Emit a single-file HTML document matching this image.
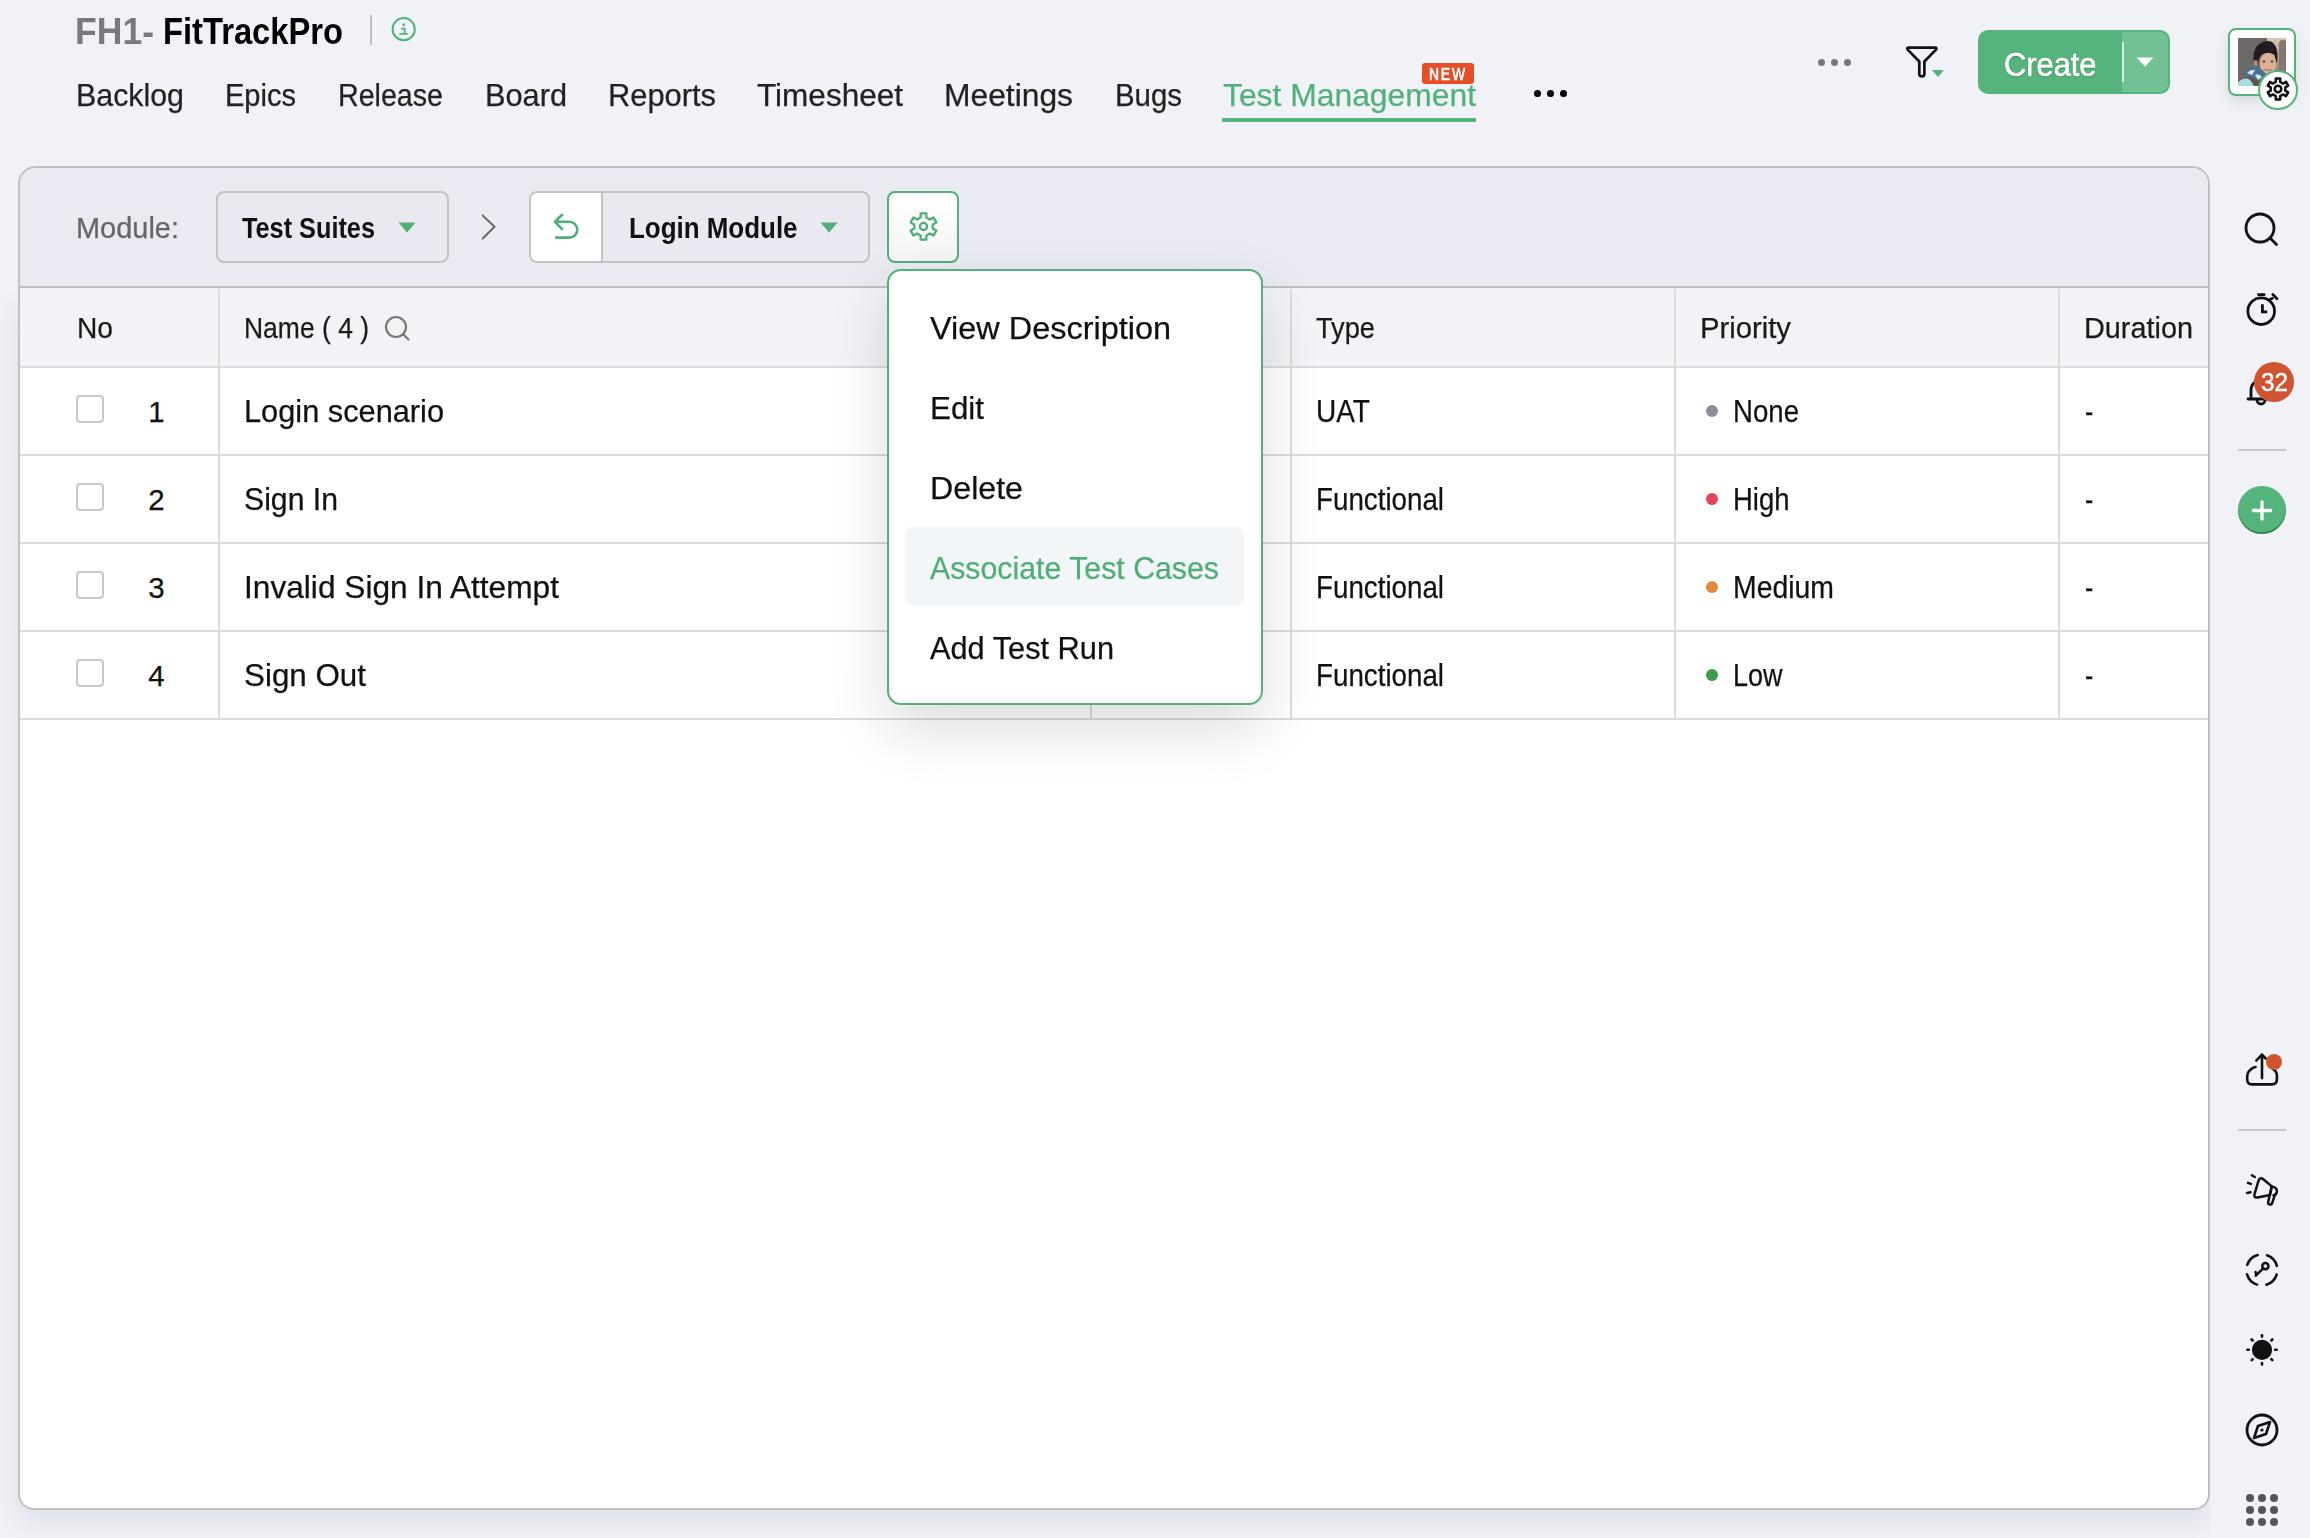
<!DOCTYPE html>
<html><head><meta charset="utf-8"><title>Test Management</title>
<style>
html,body{margin:0;padding:0;}
body{width:2310px;height:1538px;position:relative;overflow:hidden;background:#f1f2f7;font-family:"Liberation Sans",sans-serif;}
.t{position:absolute;white-space:nowrap;line-height:normal;transform-origin:0 0;-webkit-text-stroke:0.25px currentColor;}
</style></head><body>
<div style="position:absolute;left:18px;top:300px;width:2192px;height:1210px;border-radius:0 0 16px 16px;box-shadow:0 10px 28px rgba(30,40,90,.10)"></div>
<div style="position:absolute;left:2210px;top:0;width:100px;height:1538px;background:#f1f2f7"></div>
<div class="t" style="left:75px;top:11.4px;font-size:36px;color:#7a7a7a;font-weight:700;-webkit-text-stroke:0;transform:scaleX(0.9877);">FH1-</div>
<div class="t" style="left:163px;top:11.4px;font-size:36px;color:#000;font-weight:700;-webkit-text-stroke:0;transform:scaleX(0.9089);">FitTrackPro</div>
<div style="position:absolute;left:370px;top:15px;width:2px;height:30px;background:#c0c0c0"></div>
<svg style="position:absolute;left:390px;top:17px" width="28" height="28" viewBox="0 0 28 28"><circle cx="13.7" cy="12.2" r="11.1" fill="none" stroke="#52b27a" stroke-width="2"/><circle cx="13.7" cy="7.7" r="1.4" fill="#52b27a"/><path d="M11.2 11.6H14.7V16.9M9.5 16.9H17.8" fill="none" stroke="#52b27a" stroke-width="1.9"/></svg>
<div class="t" style="left:76px;top:77.0px;font-size:32px;color:#222;transform:scaleX(0.9487);">Backlog</div>
<div class="t" style="left:225px;top:77.0px;font-size:32px;color:#222;transform:scaleX(0.9073);">Epics</div>
<div class="t" style="left:338px;top:77.0px;font-size:32px;color:#222;transform:scaleX(0.8943);">Release</div>
<div class="t" style="left:485px;top:77.0px;font-size:32px;color:#222;transform:scaleX(0.9603);">Board</div>
<div class="t" style="left:608px;top:77.0px;font-size:32px;color:#222;transform:scaleX(0.9639);">Reports</div>
<div class="t" style="left:757px;top:77.0px;font-size:32px;color:#222;transform:scaleX(0.9851);">Timesheet</div>
<div class="t" style="left:944px;top:77.0px;font-size:32px;color:#222;transform:scaleX(0.9935);">Meetings</div>
<div class="t" style="left:1115px;top:77.0px;font-size:32px;color:#222;transform:scaleX(0.9186);">Bugs</div>
<div class="t" style="left:1223px;top:77.0px;font-size:32px;color:#52b17a;transform:scaleX(0.9947);">Test Management</div>
<div style="position:absolute;left:1222px;top:118px;width:254px;height:4px;background:#55b27b;border-radius:1px"></div>
<div style="position:absolute;left:1422px;top:63px;width:52px;height:21px;background:#e64e26;border-radius:3px"></div>
<div class="t" style="left:1429px;top:65.0px;font-size:16.5px;color:#fff;letter-spacing:2.2px;transform:scaleX(0.84);-webkit-text-stroke:0.7px #fff;">NEW</div>
<div style="position:absolute;left:1534px;top:90.2px;width:7px;height:7px;border-radius:50%;background:#000"></div>
<div style="position:absolute;left:1547px;top:90.2px;width:7px;height:7px;border-radius:50%;background:#000"></div>
<div style="position:absolute;left:1560px;top:90.2px;width:7px;height:7px;border-radius:50%;background:#000"></div>
<div style="position:absolute;left:1817.5px;top:58.5px;width:7px;height:7px;border-radius:50%;background:#77787d"></div>
<div style="position:absolute;left:1830.5px;top:58.5px;width:7px;height:7px;border-radius:50%;background:#77787d"></div>
<div style="position:absolute;left:1843.5px;top:58.5px;width:7px;height:7px;border-radius:50%;background:#77787d"></div>
<svg style="position:absolute;left:1900px;top:40px" width="50" height="42" viewBox="0 0 50 42"><path d="M9 7.6H34.8Q37.6 7.6 35.8 9.9L24.4 21.5V33.8A2.55 2.55 0 0 1 19.3 33.8V21.5L7.9 9.9Q6.1 7.6 9 7.6Z" fill="none" stroke="#111" stroke-width="2.7" stroke-linejoin="round"/><path d="M32 30h12l-6 7z" fill="#55b27b"/></svg>
<div style="position:absolute;left:1978px;top:30px;width:192px;height:64px;border-radius:10px;background:#54b47b;overflow:hidden"><div style="position:absolute;left:144px;top:2px;width:46px;height:60px;border-radius:0 8px 8px 0;background:#72c194;"></div><div style="position:absolute;left:144px;top:12px;width:2px;height:40px;background:rgba(255,255,255,.7)"></div></div>
<div class="t" style="left:2004px;top:44.6px;font-size:34px;color:#fff;transform:scaleX(0.9064);text-shadow:0 1px 1.5px rgba(0,0,0,.3);-webkit-text-stroke:0.6px #fff;">Create</div>
<svg style="position:absolute;left:2136px;top:57px" width="18" height="10" viewBox="0 0 18 10"><path d="M0.5 0.5h17l-8.5 9z" fill="#fff"/></svg>
<div style="position:absolute;left:2228px;top:28px;width:64px;height:64px;border:2px solid #55b27b;border-radius:8px;background:#fff;box-shadow:0 6px 14px rgba(0,0,0,.10)"></div>
<svg style="position:absolute;left:2238px;top:38px" width="48" height="48" viewBox="0 0 48 48"><defs><filter id="pb" x="-10%" y="-10%" width="120%" height="120%"><feGaussianBlur stdDeviation="0.6"/></filter><linearGradient id="dr" x1="0" y1="0" x2="0" y2="1"><stop offset="0" stop-color="#dccdb3"/><stop offset=".45" stop-color="#a89a8c"/><stop offset="1" stop-color="#7f736c"/></linearGradient><clipPath id="pc"><rect width="48" height="48"/></clipPath></defs><g clip-path="url(#pc)"><g filter="url(#pb)"><rect x="-2" y="-2" width="52" height="52" fill="#6d6867"/><rect x="29" y="-2" width="21" height="52" fill="url(#dr)"/><rect x="41" y="2" width="8" height="33" rx="3.5" fill="#85786f"/><path d="M15.5 23Q14.5 11 21 6Q28 1.5 34 4Q39 8 39.5 16Q40 22 38 26L36.5 17Q30 12.5 23 16.5Q20.5 20 20 26Z" fill="#241e20"/><ellipse cx="30" cy="25.5" rx="8.3" ry="10.8" fill="#dbb093"/><path d="M21.5 18Q28 12.5 37.5 16.5L37 12Q30 8 22 12Z" fill="#241e20"/><ellipse cx="17.8" cy="25" rx="1.8" ry="3" fill="#b98a70"/><circle cx="26" cy="23.5" r="1.3" fill="#6d4c40"/><circle cx="34" cy="23.5" r="1.3" fill="#6d4c40"/><path d="M26.5 31.5Q30 33 33.5 31.5" stroke="#b87a7c" stroke-width="1.4" fill="none"/><path d="M6 36Q11 28 19 28Q24 31 29 37L27 47Q17 45 9 41Z" fill="#46718f"/><path d="M9 35Q13 31 17 32L14 37Z M17 37Q21 35 24 39L20 42Z M22 44Q25 42 27 45L24 47Z" fill="#dfe4e8"/><path d="M3 43Q8 38 14 39L23 45L25 49L3 49Z" fill="#5f524b"/><path d="M-1 49L0 45Q3 40 9 40.5Q14 42 16 49Z" fill="#abdcdf"/></g></g></svg>
<div style="position:absolute;left:2258px;top:70px;width:36px;height:36px;border:2px solid #55b27b;border-radius:50%;background:#fff"></div>
<svg style="position:absolute;left:2258px;top:69px" width="40" height="40" viewBox="0 0 40 40"><path d="M17.83 12.79 L17.83 9.51 L22.17 9.51 L22.17 12.79 L25.16 14.52 L28.00 12.88 L30.17 16.63 L27.32 18.27 L27.32 21.73 L30.17 23.37 L28.00 27.12 L25.16 25.48 L22.17 27.21 L22.17 30.49 L17.83 30.49 L17.83 27.21 L14.84 25.48 L12.00 27.12 L9.83 23.37 L12.68 21.73 L12.68 18.27 L9.83 16.63 L12.00 12.88 L14.84 14.52Z" fill="none" stroke="#111" stroke-width="2.6" stroke-linejoin="round"/><circle cx="20" cy="20" r="3.3" fill="none" stroke="#111" stroke-width="2.5"/></svg>
<div id="panel" style="position:absolute;left:18px;top:166px;width:2188px;height:1340px;border:2px solid #c1c1c1;border-radius:18px 18px 16px 16px;background:#fff;overflow:hidden"><div style="position:absolute;left:0;top:0;width:100%;height:118px;background:#eaeaf3;border-bottom:2px solid #bfbfbf"></div><div style="position:absolute;left:0;top:120px;width:100%;height:78px;background:#f2f3f6;border-bottom:2px solid #dcdcdc"></div></div>
<div class="t" style="left:75.5px;top:211.3px;font-size:29.5px;color:#666;transform:scaleX(0.9814);">Module:</div>
<div style="position:absolute;left:216px;top:191px;width:229px;height:68px;border:2px solid #c3c3c6;border-radius:8px;background:#e9e9f2"></div>
<div class="t" style="left:242px;top:211.3px;font-size:29.5px;color:#111;font-weight:700;-webkit-text-stroke:0;transform:scaleX(0.8569);">Test Suites</div>
<svg style="position:absolute;left:398px;top:222px" width="18" height="11" viewBox="0 0 18 11"><path d="M0.5 0.5h17l-8.5 10z" fill="#4fae77"/></svg>
<svg style="position:absolute;left:478px;top:210px" width="20" height="32" viewBox="0 0 20 32"><path d="M4.7 5.5L16.5 16.7L4.7 28.5" fill="none" stroke="#68686c" stroke-width="2" stroke-linecap="round"/></svg>
<div style="position:absolute;left:529px;top:191px;width:337px;height:68px;border:2px solid #c3c3c6;border-radius:8px;background:#e9e9f2;overflow:hidden"><div style="position:absolute;left:0;top:0;width:70px;height:68px;background:#fff;border-right:2px solid #c3c3c6"></div></div>
<svg style="position:absolute;left:548px;top:208px" width="36" height="36" viewBox="0 0 36 36"><path d="M14.1 6.8L7 13.8L14.1 21.1M7 13.8H21.4A7.9 7.9 0 0 1 21.4 29.6H8.1" fill="none" stroke="#4fae77" stroke-width="2.6" stroke-linecap="round" stroke-linejoin="round"/></svg>
<div class="t" style="left:628.5px;top:211.3px;font-size:29.5px;color:#111;font-weight:700;-webkit-text-stroke:0;transform:scaleX(0.8790);">Login Module</div>
<svg style="position:absolute;left:820px;top:222px" width="18" height="11" viewBox="0 0 18 11"><path d="M0.5 0.5h17l-8.5 10z" fill="#4fae77"/></svg>
<div style="position:absolute;left:887px;top:191px;width:68px;height:68px;border:2px solid #52b07a;border-radius:8px;background:linear-gradient(#fff,#f4f4f6)"></div>
<svg style="position:absolute;left:903px;top:206px" width="40" height="40" viewBox="0 0 40 40"><path d="M17.64 11.51 L17.64 7.34 L23.36 7.34 L23.36 11.51 L26.86 13.53 L30.46 11.45 L33.32 16.40 L29.72 18.48 L29.72 22.52 L33.32 24.60 L30.46 29.55 L26.86 27.47 L23.36 29.49 L23.36 33.66 L17.64 33.66 L17.64 29.49 L14.14 27.47 L10.54 29.55 L7.68 24.60 L11.28 22.52 L11.28 18.48 L7.68 16.40 L10.54 11.45 L14.14 13.53Z" fill="none" stroke="#4fae77" stroke-width="2.3" stroke-linejoin="round"/><circle cx="20.5" cy="20.5" r="3.6" fill="none" stroke="#4fae77" stroke-width="2.3"/></svg>
<div style="position:absolute;left:218px;top:289px;width:2px;height:430px;background:#dcdcdc"></div>
<div style="position:absolute;left:1090px;top:289px;width:2px;height:430px;background:#dcdcdc"></div>
<div style="position:absolute;left:1290px;top:289px;width:2px;height:430px;background:#dcdcdc"></div>
<div style="position:absolute;left:1674px;top:289px;width:2px;height:430px;background:#dcdcdc"></div>
<div style="position:absolute;left:2058px;top:289px;width:2px;height:430px;background:#dcdcdc"></div>
<div class="t" style="left:77px;top:311.4px;font-size:30px;color:#1a1a1a;transform:scaleX(0.9385);">No</div>
<div class="t" style="left:244px;top:311.4px;font-size:30px;color:#1a1a1a;transform:scaleX(0.8823);">Name ( 4 )</div>
<svg style="position:absolute;left:382px;top:313px" width="30" height="30" viewBox="0 0 30 30"><circle cx="14" cy="14" r="10" fill="none" stroke="#777" stroke-width="2.2"/><path d="M21.5 21.5l5 5" stroke="#777" stroke-width="2.2" stroke-linecap="round"/></svg>
<div class="t" style="left:1316px;top:311.4px;font-size:30px;color:#1a1a1a;transform:scaleX(0.9070);">Type</div>
<div class="t" style="left:1700px;top:311.4px;font-size:30px;color:#1a1a1a;transform:scaleX(0.9749);">Priority</div>
<div class="t" style="left:2084px;top:311.4px;font-size:30px;color:#1a1a1a;transform:scaleX(0.9611);">Duration</div>
<div style="position:absolute;left:20px;top:454px;width:2188px;height:2px;background:#dcdcdc"></div>
<div style="position:absolute;left:76px;top:395px;width:24px;height:24px;border:2px solid #c9c9c9;border-radius:4px;background:#fff"></div>
<div class="t" style="left:148.3px;top:395.3px;font-size:29.5px;color:#111;">1</div>
<div class="t" style="left:244px;top:393.0px;font-size:32px;color:#111;transform:scaleX(0.9609);">Login scenario</div>
<div class="t" style="left:1316px;top:393.0px;font-size:32px;color:#111;transform:scaleX(0.8763);">UAT</div>
<div style="position:absolute;left:1706px;top:405px;width:12px;height:12px;border-radius:50%;background:#8a9099"></div>
<div class="t" style="left:1733px;top:393.0px;font-size:32px;color:#111;transform:scaleX(0.8627);">None</div>
<div class="t" style="left:2084.5px;top:393.0px;font-size:32px;color:#111;transform:scaleX(0.7789);">-</div>
<div style="position:absolute;left:20px;top:542px;width:2188px;height:2px;background:#dcdcdc"></div>
<div style="position:absolute;left:76px;top:483px;width:24px;height:24px;border:2px solid #c9c9c9;border-radius:4px;background:#fff"></div>
<div class="t" style="left:148.3px;top:483.3px;font-size:29.5px;color:#111;">2</div>
<div class="t" style="left:244px;top:481.0px;font-size:32px;color:#111;transform:scaleX(0.9435);">Sign In</div>
<div class="t" style="left:1316px;top:481.0px;font-size:32px;color:#111;transform:scaleX(0.8670);">Functional</div>
<div style="position:absolute;left:1706px;top:493px;width:12px;height:12px;border-radius:50%;background:#e0435a"></div>
<div class="t" style="left:1733px;top:481.0px;font-size:32px;color:#111;transform:scaleX(0.8585);">High</div>
<div class="t" style="left:2084.5px;top:481.0px;font-size:32px;color:#111;transform:scaleX(0.7789);">-</div>
<div style="position:absolute;left:20px;top:630px;width:2188px;height:2px;background:#dcdcdc"></div>
<div style="position:absolute;left:76px;top:571px;width:24px;height:24px;border:2px solid #c9c9c9;border-radius:4px;background:#fff"></div>
<div class="t" style="left:148.3px;top:571.3px;font-size:29.5px;color:#111;">3</div>
<div class="t" style="left:244px;top:569.0px;font-size:32px;color:#111;transform:scaleX(0.9893);">Invalid Sign In Attempt</div>
<div class="t" style="left:1316px;top:569.0px;font-size:32px;color:#111;transform:scaleX(0.8670);">Functional</div>
<div style="position:absolute;left:1706px;top:581px;width:12px;height:12px;border-radius:50%;background:#e28a3c"></div>
<div class="t" style="left:1733px;top:569.0px;font-size:32px;color:#111;transform:scaleX(0.8874);">Medium</div>
<div class="t" style="left:2084.5px;top:569.0px;font-size:32px;color:#111;transform:scaleX(0.7789);">-</div>
<div style="position:absolute;left:20px;top:718px;width:2188px;height:2px;background:#dcdcdc"></div>
<div style="position:absolute;left:76px;top:659px;width:24px;height:24px;border:2px solid #c9c9c9;border-radius:4px;background:#fff"></div>
<div class="t" style="left:148.3px;top:659.3px;font-size:29.5px;color:#111;">4</div>
<div class="t" style="left:244px;top:657.0px;font-size:32px;color:#111;transform:scaleX(0.9798);">Sign Out</div>
<div class="t" style="left:1316px;top:657.0px;font-size:32px;color:#111;transform:scaleX(0.8670);">Functional</div>
<div style="position:absolute;left:1706px;top:669px;width:12px;height:12px;border-radius:50%;background:#3f9a4a"></div>
<div class="t" style="left:1733px;top:657.0px;font-size:32px;color:#111;transform:scaleX(0.8432);">Low</div>
<div class="t" style="left:2084.5px;top:657.0px;font-size:32px;color:#111;transform:scaleX(0.7789);">-</div>
<div style="position:absolute;left:887px;top:269px;width:372px;height:432px;border:2px solid #52b07a;border-radius:14px;background:#fff;box-shadow:0 24px 60px rgba(0,0,0,.14)"></div>
<div style="position:absolute;left:905px;top:527px;width:339px;height:79px;border-radius:8px;background:#f3f6f8"></div>
<div class="t" style="left:930px;top:310.0px;font-size:32px;color:#111;transform:scaleX(1.0137);">View Description</div>
<div class="t" style="left:930px;top:390.0px;font-size:32px;color:#111;transform:scaleX(0.9793);">Edit</div>
<div class="t" style="left:930px;top:470.0px;font-size:32px;color:#111;transform:scaleX(1.0054);">Delete</div>
<div class="t" style="left:930px;top:550.0px;font-size:32px;color:#4fae77;transform:scaleX(0.9465);">Associate Test Cases</div>
<div class="t" style="left:930px;top:630.0px;font-size:32px;color:#111;transform:scaleX(0.9607);">Add Test Run</div>
<svg style="position:absolute;left:2240px;top:208px" width="44" height="44" viewBox="0 0 44 44"><circle cx="20" cy="20" r="14" fill="none" stroke="#111" stroke-width="2.8"/><path d="M30 30l6.5 6.5" stroke="#111" stroke-width="2.8" stroke-linecap="round"/></svg>
<svg style="position:absolute;left:2240px;top:288px" width="44" height="44" viewBox="0 0 44 44"><circle cx="21.2" cy="23.2" r="13.3" fill="none" stroke="#111" stroke-width="2.8"/><path d="M18.4 6.6h5.8M32.8 6.6l4.2 4.2M29.8 11.6l2.5-1.2" stroke="#111" stroke-width="2.8" stroke-linecap="round"/><path d="M22.4 16.3V23.8H27.3" fill="none" stroke="#111" stroke-width="2.8"/></svg>
<svg style="position:absolute;left:2240px;top:366px" width="44" height="44" viewBox="0 0 44 44"><path d="M8 33h26M11 33v-9a10 10 0 0 1 20 0v9M17 34a4 4 0 0 0 8 0" fill="none" stroke="#111" stroke-width="2.8" stroke-linecap="round"/></svg>
<div style="position:absolute;left:2254px;top:362px;width:40px;height:40px;border-radius:50%;background:#cf5530"></div>
<div class="t" style="left:2260.5px;top:368.0px;font-size:25px;color:#fff;transform:scaleX(0.9708);-webkit-text-stroke:0.4px #fff;">32</div>
<div style="position:absolute;left:2238px;top:449px;width:48px;height:2px;background:#c8c8c8"></div>
<div style="position:absolute;left:2238px;top:486px;width:48px;height:48px;border-radius:50%;background:#54b47b;box-shadow:inset 0 -1.5px 1px rgba(20,100,55,.7)"></div>
<svg style="position:absolute;left:2238px;top:486px" width="48" height="48" viewBox="0 0 48 48"><path d="M24 15.9v17.2M15.4 24.5h17.2" stroke="#fff" stroke-width="3.3" stroke-linecap="round"/></svg>
<svg style="position:absolute;left:2240px;top:1048px" width="44" height="44" viewBox="0 0 44 44" fill="none" stroke="#111" stroke-width="2.6" stroke-linecap="round" stroke-linejoin="round"><path d="M22 30.1V6.6M16.3 12.6L22 6.6L25.7 10.5"/><path d="M15.6 19Q13.2 19.3 11.6 20.8L9.4 22.8Q7.2 24.8 7.2 28V31.6Q7.2 36.4 12 36.4H32Q36.9 36.4 36.9 31.6V27Q36.9 24.4 35 22.7L33.2 21.2"/></svg>
<div style="position:absolute;left:2266px;top:1054px;width:16px;height:16px;border-radius:50%;background:#cf5530"></div>
<div style="position:absolute;left:2238px;top:1129px;width:48px;height:2px;background:#c8c8c8"></div>
<svg style="position:absolute;left:2236px;top:1164px" width="52" height="52" viewBox="0 0 52 52" fill="none" stroke="#111" stroke-width="2.5" stroke-linecap="round" stroke-linejoin="round"><path d="M15.9 11.2L18.8 13M12 18.9L14.9 19.9M11 28.9L14.5 28.2"/><path d="M22.6 16.4Q24.3 12.6 27.3 15.2L35.8 22.4L34 30.9L21.4 33.4Q17.6 34 18.5 30.3Z"/><path d="M35.8 22.4Q41.2 23.6 40.9 27.6Q40.5 31 37.3 31.4"/><path d="M35.4 23.6L32.2 38.2Q31.8 40.6 34 40.6Q35.8 40.6 36.3 38.6L39 30.6"/></svg>
<svg style="position:absolute;left:2236px;top:1244px" width="52" height="52" viewBox="0 0 52 52" fill="none" stroke="#111" stroke-width="2.6" stroke-linecap="round"><circle cx="25.9" cy="25.9" r="15.5" stroke-dasharray="14.75 9.6" stroke-dashoffset="19.55"/><circle cx="29.4" cy="22.1" r="3.1" stroke-width="2.5"/><path d="M27.2 24.3L19.8 31.7M19.6 28L20.2 30.6" stroke-width="2.5"/></svg>
<svg style="position:absolute;left:2236px;top:1324px" width="52" height="52" viewBox="0 0 52 52"><circle cx="26" cy="25.8" r="10.1" fill="#111"/><path d="M26 11.2v1.4" stroke="#111" stroke-width="2.6" stroke-linecap="round" transform="rotate(0 26 25.8)"/><path d="M26 11.2v1.4" stroke="#111" stroke-width="2.6" stroke-linecap="round" transform="rotate(45 26 25.8)"/><path d="M26 11.2v1.4" stroke="#111" stroke-width="2.6" stroke-linecap="round" transform="rotate(90 26 25.8)"/><path d="M26 11.2v1.4" stroke="#111" stroke-width="2.6" stroke-linecap="round" transform="rotate(135 26 25.8)"/><path d="M26 11.2v1.4" stroke="#111" stroke-width="2.6" stroke-linecap="round" transform="rotate(180 26 25.8)"/><path d="M26 11.2v1.4" stroke="#111" stroke-width="2.6" stroke-linecap="round" transform="rotate(225 26 25.8)"/><path d="M26 11.2v1.4" stroke="#111" stroke-width="2.6" stroke-linecap="round" transform="rotate(270 26 25.8)"/><path d="M26 11.2v1.4" stroke="#111" stroke-width="2.6" stroke-linecap="round" transform="rotate(315 26 25.8)"/></svg>
<svg style="position:absolute;left:2240px;top:1408px" width="44" height="44" viewBox="0 0 44 44"><circle cx="22" cy="22" r="15" fill="none" stroke="#111" stroke-width="2.8"/><path d="M30 14l-4 12-12 4 4-12z" fill="none" stroke="#111" stroke-width="2.6" stroke-linejoin="round"/><circle cx="22" cy="22" r="1.6" fill="#111"/></svg>
<div style="position:absolute;left:2246px;top:1494px;width:8px;height:8px;border-radius:50%;background:#555"></div>
<div style="position:absolute;left:2258px;top:1494px;width:8px;height:8px;border-radius:50%;background:#555"></div>
<div style="position:absolute;left:2270px;top:1494px;width:8px;height:8px;border-radius:50%;background:#555"></div>
<div style="position:absolute;left:2246px;top:1506px;width:8px;height:8px;border-radius:50%;background:#555"></div>
<div style="position:absolute;left:2258px;top:1506px;width:8px;height:8px;border-radius:50%;background:#555"></div>
<div style="position:absolute;left:2270px;top:1506px;width:8px;height:8px;border-radius:50%;background:#555"></div>
<div style="position:absolute;left:2246px;top:1518px;width:8px;height:8px;border-radius:50%;background:#555"></div>
<div style="position:absolute;left:2258px;top:1518px;width:8px;height:8px;border-radius:50%;background:#555"></div>
<div style="position:absolute;left:2270px;top:1518px;width:8px;height:8px;border-radius:50%;background:#555"></div>
</body></html>
